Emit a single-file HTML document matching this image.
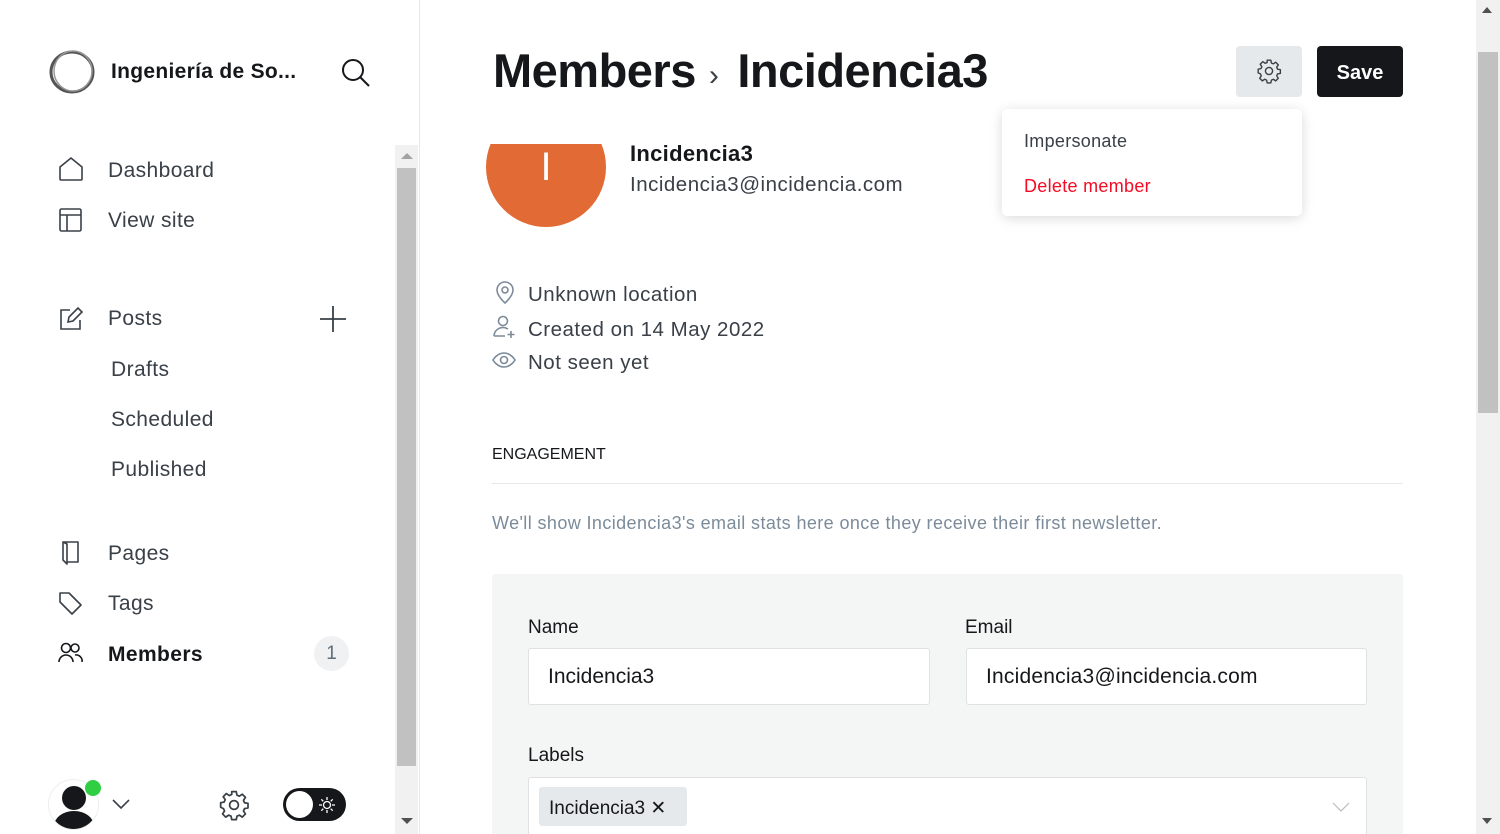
<!DOCTYPE html>
<html style="overflow:hidden;height:834px"><head><meta charset="utf-8"><style>
*{box-sizing:border-box;margin:0;padding:0}
body{width:1500px;height:834px;overflow:hidden;background:#fff;font-family:"Liberation Sans",sans-serif;color:#15171a;position:relative}
.abs{position:absolute}
.side{left:0;top:0;width:420px;height:834px;border-right:1px solid #e6e9eb}
.nav{position:absolute;left:108px;font-size:21px;color:#394047;line-height:24px;letter-spacing:0.4px}
.ico{position:absolute}
svg{display:block}
.meta{position:absolute;left:528px;font-size:20.5px;color:#394047;letter-spacing:0.5px}
</style></head><body>
<div class="abs side">
  <svg class="ico" style="left:48px;top:49px" width="48" height="46" viewBox="0 0 48 46"><ellipse cx="24" cy="23" rx="21" ry="20" fill="none" stroke="#555" stroke-width="3"/><ellipse cx="25" cy="22" rx="19" ry="20" fill="none" stroke="#999" stroke-width="1.5"/></svg>
  <div class="abs" style="left:111px;top:60px;font-size:21px;font-weight:bold;color:#15171a;letter-spacing:0.3px">Ingeniería de So...</div>
  <svg class="ico" style="left:340px;top:57px" width="32" height="32" viewBox="0 0 32 32"><circle cx="13" cy="13" r="10" fill="none" stroke="#15171a" stroke-width="2"/><path d="M20.5 20.5L29 29" stroke="#15171a" stroke-width="2"/></svg>

  <svg class="ico" style="left:58px;top:156px" width="26" height="26" viewBox="0 0 26 26"><path d="M2 11L13 2l11 9v12a1 1 0 0 1-1 1H3a1 1 0 0 1-1-1z" fill="none" stroke="#394047" stroke-width="1.6"/></svg>
  <div class="nav" style="top:159px">Dashboard</div>
  <svg class="ico" style="left:58px;top:207px" width="26" height="26" viewBox="0 0 26 26"><rect x="2" y="2" width="21" height="22" rx="1.5" fill="none" stroke="#394047" stroke-width="1.6"/><path d="M2 8h21M9 8v16" stroke="#394047" stroke-width="1.6"/></svg>
  <div class="nav" style="top:209px">View site</div>

  <svg class="ico" style="left:58px;top:305px" width="26" height="26" viewBox="0 0 26 26"><path d="M12 5H3v19h19v-9" fill="none" stroke="#394047" stroke-width="1.6"/><path d="M10 17l1-5L20 3l4 4-9 9z" fill="none" stroke="#394047" stroke-width="1.6"/></svg>
  <div class="nav" style="top:307px">Posts</div>
  <svg class="ico" style="left:319px;top:305px" width="28" height="28" viewBox="0 0 28 28"><path d="M14 1v26M1 14h26" stroke="#394047" stroke-width="1.8"/></svg>
  <div class="nav" style="left:111px;top:358px">Drafts</div>
  <div class="nav" style="left:111px;top:408px">Scheduled</div>
  <div class="nav" style="left:111px;top:458px">Published</div>

  <svg class="ico" style="left:58px;top:540px" width="26" height="26" viewBox="0 0 26 26"><path d="M5 2h15v20H9M5 2v18l4 4V4z" fill="none" stroke="#394047" stroke-width="1.6" stroke-linejoin="round"/></svg>
  <div class="nav" style="top:542px">Pages</div>
  <svg class="ico" style="left:58px;top:590px" width="26" height="26" viewBox="0 0 26 26"><path d="M2 3v9l12 12 9-9L11 3H3z" fill="none" stroke="#394047" stroke-width="1.6" stroke-linejoin="round"/></svg>
  <div class="nav" style="top:592px">Tags</div>
  <svg class="ico" style="left:58px;top:642px" width="26" height="22" viewBox="0 0 26 22"><circle cx="8" cy="6" r="4.5" fill="none" stroke="#15171a" stroke-width="1.6"/><path d="M1 20a7 7 0 0 1 14 0" fill="none" stroke="#15171a" stroke-width="1.6"/><circle cx="17" cy="6" r="4" fill="none" stroke="#15171a" stroke-width="1.6"/><path d="M17 13a6 6 0 0 1 7 7" fill="none" stroke="#15171a" stroke-width="1.6"/></svg>
  <div class="nav" style="top:643px;font-weight:bold;color:#15171a">Members</div>
  <div class="abs" style="left:314px;top:636px;width:35px;height:35px;border-radius:50%;background:#eff1f3;color:#626d79;font-size:19px;text-align:center;line-height:35px">1</div>

  <div class="abs" style="left:48px;top:779px;width:51px;height:51px;border-radius:50%;border:1px solid #eee;overflow:hidden;background:#fff">
    <div class="abs" style="left:13px;top:6px;width:24px;height:24px;border-radius:50%;background:#15171a"></div>
    <div class="abs" style="left:5px;top:31px;width:40px;height:30px;border-radius:50%;background:#15171a"></div>
  </div>
  <div class="abs" style="left:85px;top:780px;width:16px;height:16px;border-radius:50%;background:#30cf43"></div>
  <svg class="ico" style="left:111px;top:798px" width="20" height="12" viewBox="0 0 20 12"><path d="M2 2l8 8 8-8" fill="none" stroke="#394047" stroke-width="1.6"/></svg>
  <svg class="ico" style="left:218px;top:789px" width="32" height="32" viewBox="0 0 24 24"><path d="M10.3 2h3.4l.5 2.6 1.8.8 2.2-1.5 2.4 2.4-1.5 2.2.8 1.8 2.6.5v3.4l-2.6.5-.8 1.8 1.5 2.2-2.4 2.4-2.2-1.5-1.8.8-.5 2.6h-3.4l-.5-2.6-1.8-.8-2.2 1.5-2.4-2.4 1.5-2.2-.8-1.8L2 13.7v-3.4l2.6-.5.8-1.8-1.5-2.2 2.4-2.4 2.2 1.5 1.8-.8z" fill="none" stroke="#394047" stroke-width="1.3" stroke-linejoin="round"/><circle cx="12" cy="12" r="3.3" fill="none" stroke="#394047" stroke-width="1.3"/></svg>
  <div class="abs" style="left:283px;top:788px;width:63px;height:33px;border-radius:17px;background:#15171a">
    <div class="abs" style="left:3px;top:3px;width:27px;height:27px;border-radius:50%;background:#fff"></div>
    <svg class="ico" style="left:35px;top:8px" width="18" height="18" viewBox="0 0 18 18"><circle cx="9" cy="9" r="3.5" fill="none" stroke="#fff" stroke-width="1.3"/><path d="M9 1v3M9 14v3M1 9h3M14 9h3M3.3 3.3l2 2M12.7 12.7l2 2M3.3 14.7l2-2M12.7 5.3l2-2" stroke="#fff" stroke-width="1.3"/></svg>
  </div>

  <div class="abs" style="left:395px;top:145px;width:23px;height:689px;background:#f1f1f1"></div>
  <div class="abs" style="left:397px;top:168px;width:19px;height:598px;background:#c1c1c1"></div>
  <div class="abs" style="left:401px;top:153px;width:0;height:0;border-left:6px solid transparent;border-right:6px solid transparent;border-bottom:6px solid #a3a3a3"></div>
  <div class="abs" style="left:401px;top:818px;width:0;height:0;border-left:6px solid transparent;border-right:6px solid transparent;border-top:6px solid #505050"></div>
</div>

<div class="abs" style="left:493px;top:43px;font-size:47px;font-weight:bold;letter-spacing:-0.5px;white-space:nowrap">Members<span style="font-weight:normal;font-size:30px;color:#394047;position:relative;top:-2px;margin:0 19px 0 13px">›</span>Incidencia3</div>
<div class="abs" style="left:1236px;top:46px;width:66px;height:51px;border-radius:4px;background:#e6e9eb"></div>
<svg class="ico" style="left:1256px;top:58px" width="26" height="26" viewBox="0 0 24 24"><path d="M10.3 2h3.4l.5 2.6 1.8.8 2.2-1.5 2.4 2.4-1.5 2.2.8 1.8 2.6.5v3.4l-2.6.5-.8 1.8 1.5 2.2-2.4 2.4-2.2-1.5-1.8.8-.5 2.6h-3.4l-.5-2.6-1.8-.8-2.2 1.5-2.4-2.4 1.5-2.2-.8-1.8L2 13.7v-3.4l2.6-.5.8-1.8-1.5-2.2 2.4-2.4 2.2 1.5 1.8-.8z" fill="none" stroke="#394047" stroke-width="1.3" stroke-linejoin="round"/><circle cx="12" cy="12" r="3.3" fill="none" stroke="#394047" stroke-width="1.3"/></svg>
<div class="abs" style="left:1317px;top:46px;width:86px;height:51px;border-radius:4px;background:#15171a;color:#fff;font-weight:bold;font-size:20px;text-align:center;line-height:54px">Save</div>

<div class="abs" style="left:486px;top:144px;width:120px;height:83px;overflow:hidden">
  <div class="abs" style="left:0;top:-37px;width:120px;height:120px;border-radius:50%;background:#e26a35;color:#fff;font-size:40px;text-align:center;line-height:120px">I</div>
</div>
<div class="abs" style="left:630px;top:139px;height:23px;overflow:hidden;font-size:22px;font-weight:bold;line-height:30px;letter-spacing:0.3px">Incidencia3</div>
<div class="abs" style="left:630px;top:173px;font-size:20.5px;color:#394047;letter-spacing:0.5px">Incidencia3@incidencia.com</div>

<div class="abs" style="left:1002px;top:109px;width:300px;height:107px;border-radius:5px;background:#fff;box-shadow:0 2px 12px rgba(0,0,0,.15)">
  <div class="abs" style="left:22px;top:22px;font-size:18px;color:#394047;letter-spacing:0.3px">Impersonate</div>
  <div class="abs" style="left:22px;top:67px;font-size:18px;color:#f50b23;letter-spacing:0.3px">Delete member</div>
</div>

<svg class="ico" style="left:494px;top:281px" width="22" height="24" viewBox="0 0 22 24"><path d="M11 22s-8-7-8-13a8 8 0 0 1 16 0c0 6-8 13-8 13z" fill="none" stroke="#7c8b9a" stroke-width="1.6"/><circle cx="11" cy="9" r="3" fill="none" stroke="#7c8b9a" stroke-width="1.6"/></svg>
<div class="meta" style="top:283px">Unknown location</div>
<svg class="ico" style="left:493px;top:315px" width="24" height="24" viewBox="0 0 24 24"><circle cx="10" cy="6" r="4.5" fill="none" stroke="#7c8b9a" stroke-width="1.6"/><path d="M1 21a9 9 0 0 1 14-7" fill="none" stroke="#7c8b9a" stroke-width="1.6"/><path d="M1 21h11M18 16v7M14.5 19.5h7" stroke="#7c8b9a" stroke-width="1.6"/></svg>
<div class="meta" style="top:318px">Created on 14 May 2022</div>
<svg class="ico" style="left:492px;top:351px" width="24" height="18" viewBox="0 0 24 18"><path d="M1 9s4-7 11-7 11 7 11 7-4 7-11 7S1 9 1 9z" fill="none" stroke="#7c8b9a" stroke-width="1.6"/><circle cx="12" cy="9" r="3.5" fill="none" stroke="#7c8b9a" stroke-width="1.6"/></svg>
<div class="meta" style="top:351px">Not seen yet</div>

<div class="abs" style="left:492px;top:446px;font-size:16px;color:#15171a">ENGAGEMENT</div>
<div class="abs" style="left:492px;top:483px;width:911px;height:1px;background:#e6e9eb"></div>
<div class="abs" style="left:492px;top:513px;font-size:18px;color:#7c8b9a;letter-spacing:0.4px">We'll show Incidencia3's email stats here once they receive their first newsletter.</div>

<div class="abs" style="left:492px;top:574px;width:911px;height:260px;background:#f4f5f5;border-radius:3px 3px 0 0;overflow:hidden">
  <div class="abs" style="left:36px;top:43px;font-size:19px">Name</div>
  <div class="abs" style="top:43px;font-size:19px;left:473px">Email</div>
  <div class="abs" style="left:36px;top:74px;width:402px;height:57px;background:#fff;border:1px solid #dfe1e3;border-radius:3px;font-size:21px;color:#15171a;padding:16px 19px">Incidencia3</div>
  <div class="abs" style="left:474px;top:74px;width:401px;height:57px;background:#fff;border:1px solid #dfe1e3;border-radius:3px;font-size:21px;color:#15171a;padding:16px 19px;letter-spacing:0.2px">Incidencia3@incidencia.com</div>
  <div class="abs" style="left:36px;top:171px;font-size:19px">Labels</div>
  <div class="abs" style="left:36px;top:203px;width:839px;height:70px;background:#fff;border:1px solid #dfe1e3;border-radius:3px">
    <div class="abs" style="left:10px;top:9px;width:148px;height:39px;background:#e6e9eb;border-radius:3px;font-size:19px;padding:10px 10px;color:#15171a">Incidencia3 ✕</div>
    <svg class="ico" style="left:803px;top:23px" width="18" height="12" viewBox="0 0 18 12"><path d="M1 2l8 8 8-8" fill="none" stroke="#bbb" stroke-width="1.2"/></svg>
  </div>
</div>

<div class="abs" style="left:1476px;top:0;width:24px;height:834px;background:#f1f1f1"></div>
<div class="abs" style="left:1478px;top:52px;width:20px;height:361px;background:#c1c1c1"></div>
<div class="abs" style="left:1482px;top:7px;width:0;height:0;border-left:5px solid transparent;border-right:5px solid transparent;border-bottom:6px solid #505050"></div>
<div class="abs" style="left:1482px;top:818px;width:0;height:0;border-left:5px solid transparent;border-right:5px solid transparent;border-top:6px solid #505050"></div>
</body></html>
